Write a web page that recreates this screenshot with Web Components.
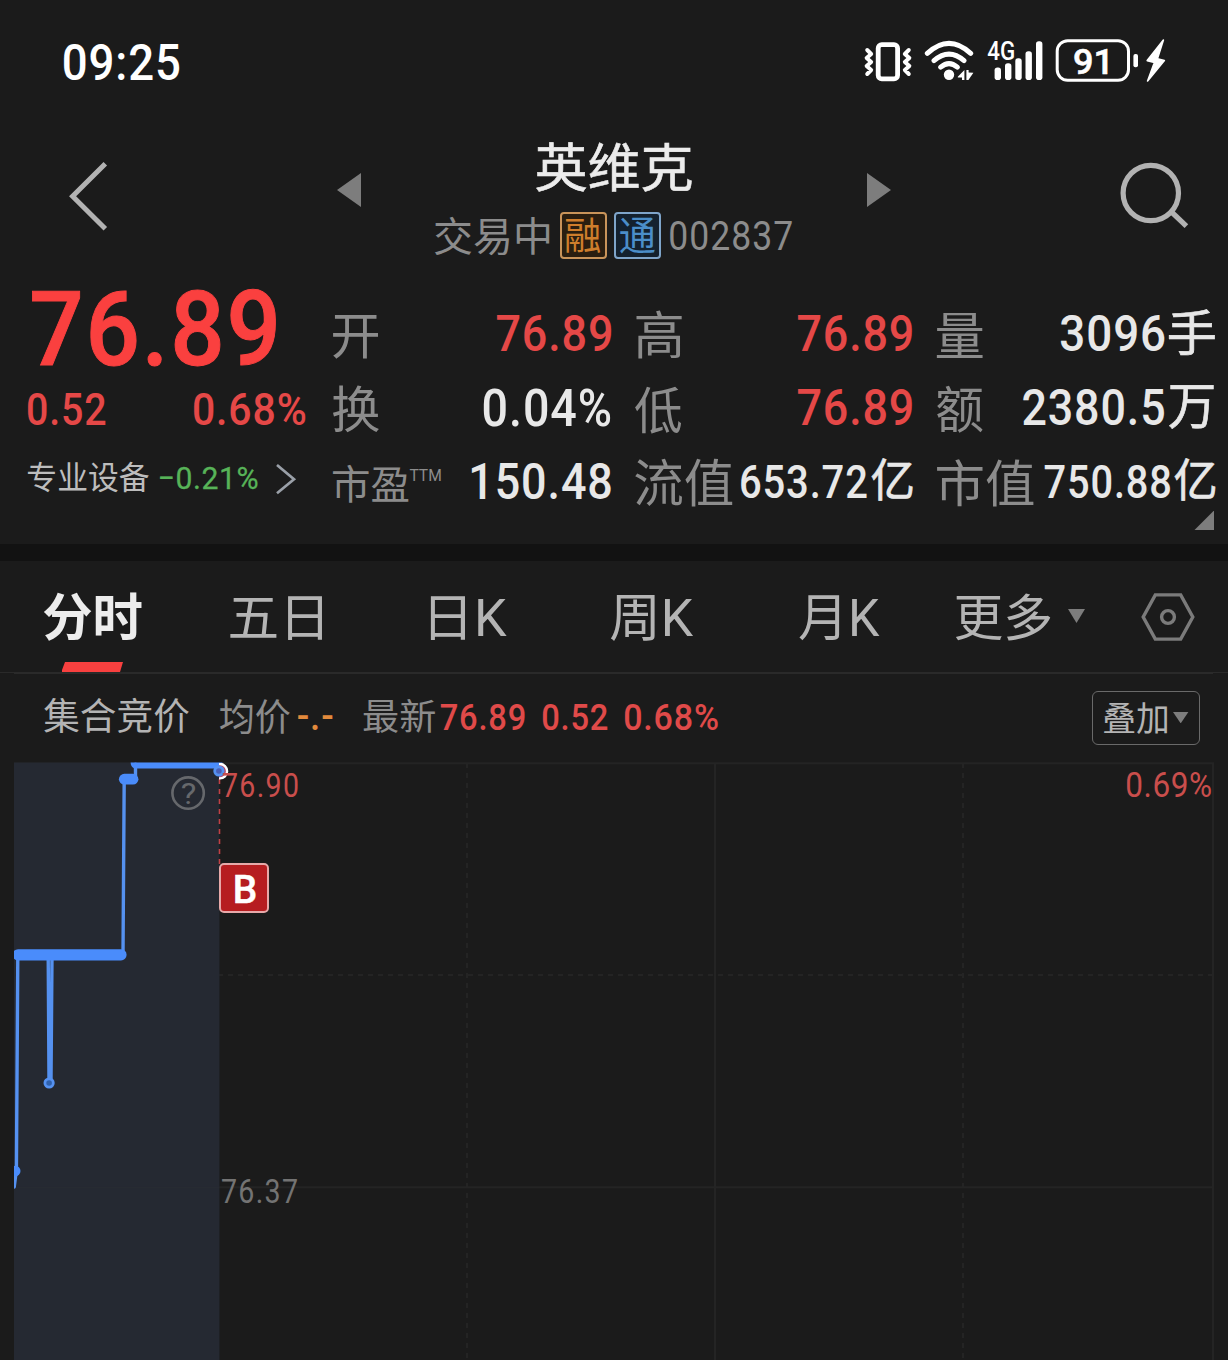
<!DOCTYPE html>
<html lang="zh-CN">
<head>
<meta charset="utf-8">
<title>英维克 002837</title>
<style>
html,body{margin:0;padding:0;background:#1b1b1b}
body{width:1228px;height:1360px;overflow:hidden;font-family:Roboto,"Noto Sans CJK SC",sans-serif;color:#e8e8e8}
</style>
</head>
<body>
<stock-page></stock-page>
<script>
// Base class: renders a template string into an open shadow root.
class Base extends HTMLElement {
  constructor(){ super(); this.attachShadow({mode:'open'}); }
  connectedCallback(){
    if(this.done) return; this.done = true;
    this.shadowRoot.innerHTML = '<style>:host{display:block}*{box-sizing:border-box}svg{display:block}' + (this.css||'') + '</style>' + this.html();
  }
  html(){ return '<slot></slot>'; }
}

// Text whose inked area fills exactly w x h pixels.
const pen = document.createElement('canvas').getContext('2d');
class FitText extends HTMLElement {
  constructor(){ super(); this.attachShadow({mode:'open'}); }
  connectedCallback(){
    const n = (k,d) => this.hasAttribute(k) ? parseFloat(this.getAttribute(k)) : d;
    const w=n('w',10), h=n('h',10), fs=n('fs',20), wt=n('wt',400), ls=n('ls',0), st=n('st',0);
    const fam = 'Roboto,"Noto Sans CJK SC",sans-serif';
    this.shadowRoot.innerHTML = `<style>
      :host{display:block;flex:none;width:${w}px;height:${h}px}
      span{display:block;width:max-content;white-space:nowrap;font:${wt} ${fs}px/.85 ${fam};letter-spacing:${ls}px;transform-origin:0 0;-webkit-text-stroke:${st}px currentColor}
      i{display:inline-block;width:0;height:0}
    </style><span><slot></slot><i></i></span>`;
    // Measured at ten times the size, so that rounding of the glyph bounds stays small.
    pen.font = `${wt} ${fs*10}px ${fam}`;
    pen.letterSpacing = ls*10+'px';
    const m = pen.measureText(this.textContent);
    const L=m.actualBoundingBoxLeft/10, R=m.actualBoundingBoxRight/10, A=m.actualBoundingBoxAscent/10, D=m.actualBoundingBoxDescent/10;
    // Antialiased edges spill over the outline, so the ink is inset slightly.
    const ix = .8 + st/2, iy = .2 + st/2;
    const sx = (w-2*ix)/(L+R), sy = (h-2*iy)/(A+D);
    const s = this.shadowRoot.querySelector('span'), probe = this.shadowRoot.querySelector('i');
    const base = probe.getBoundingClientRect().bottom - s.getBoundingClientRect().top;
    s.style.transform = `translate(${ix+L*sx}px,${iy-(base-A)*sy}px) scale(${sx},${sy})`;
  }
}
customElements.define('fit-text', FitText);

customElements.define('status-bar', class extends Base {
  css = `:host{height:120px}.row{display:flex;justify-content:space-between;align-items:flex-start;padding:0 60px 0 63px;color:#fff}
    .icons{display:flex;align-items:flex-start;padding-top:36px}.cell{display:grid}.cell>*{grid-area:1/1}`;
  html(){ return `<div class="row">
    <fit-text w="117" h="37.7" fs="52" wt="500" ls="1" style="margin-top:43.3px">09:25</fit-text>
    <div class="icons">
      <svg width="122" height="50" viewBox="862 36 122 50" fill="none" stroke="#fff" stroke-linecap="round" stroke-linejoin="round">
        <rect x="878.2" y="44.6" width="19.4" height="34.2" rx="3.6" stroke-width="4.8"/>
        <path d="M867.2 50l4 4-4.6 4 4.6 4-4.6 4 4.6 4-4 4M908.8 50l-4 4 4.6 4-4.6 4 4.6 4-4.6 4 4 4" stroke-width="3.9"/>
        <path d="M927.3 53.4Q949 33.4 970.7 53.4M934 60.6Q949 47.5 964 60.6M940.7 67.2Q949 60 957.3 67.2" stroke-width="5"/>
        <circle cx="949" cy="74.7" r="5.2" fill="#fff" stroke="none"/>
        <path d="M957.8 76.8L964.4 70V80H962V77.5H957.8ZM966.4 70H968.6V72.6L973.4 72.8L968.4 80H966.4Z" fill="#fff" stroke="none"/>
      </svg>
      <div class="cell">
        <svg width="70" height="50" viewBox="984 36 70 50" fill="#fff">
          <rect x="994.6" y="67.6" width="6.4" height="12.4" rx="2.8"/><rect x="1005" y="63.3" width="6.4" height="16.7" rx="2.8"/><rect x="1015.3" y="58.3" width="6.4" height="21.7" rx="2.8"/><rect x="1025.5" y="51.2" width="6.4" height="28.8" rx="2.8"/><rect x="1036" y="41.2" width="6.4" height="38.8" rx="2.8"/>
        </svg>
        <fit-text w="27.6" h="18.8" fs="25" wt="500" style="margin:5.7px 0 0 2.8px">4G</fit-text>
      </div>
      <div class="cell">
        <svg width="114" height="50" viewBox="1054 36 114 50">
          <rect x="1057.2" y="40.7" width="71.3" height="39.6" rx="10.5" fill="none" stroke="#fff" stroke-width="3"/>
          <rect x="1133.4" y="54" width="4.6" height="13.2" rx="2" fill="#fff"/>
          <path d="M1163.4 40L1147.2 60.6L1154.4 62.4L1147.6 81L1164.4 60.6L1157.4 58.8Z" fill="#fff" stroke="#fff" stroke-linejoin="round" stroke-width="1.6"/>
        </svg>
        <fit-text w="35.6" h="26.8" fs="36" wt="500" st=".6" style="margin:11.8px 0 0 19.2px">91</fit-text>
      </div>
    </div></div>`; }
});

customElements.define('stock-badge', class extends Base {
  css = `:host{display:grid;flex:none;width:47px;height:47px;border:2px solid var(--edge);border-radius:4px;background:var(--fill);color:var(--ink);place-items:center}`;
});

customElements.define('stock-header', class extends Base {
  css = `:host{height:150px}.bar{display:flex;align-items:flex-start}.mid{width:554px;margin-left:226px;display:flex;align-items:flex-start;justify-content:space-between}
    .title{display:flex;flex-direction:column;align-items:flex-start;width:360px}.sub{display:flex;align-items:flex-start;color:#8c8c8c;height:48px}`;
  html(){ return `<div class="bar">
    <svg width="44" height="76" viewBox="67 158 44 76" style="margin:38px 0 0 67px" fill="none" stroke="#b2b2b2" stroke-width="5"><path d="M105.3 163.8L72.6 196.3L105.3 228.8"/></svg>
    <div class="mid">
      <svg width="24" height="34" viewBox="0 0 24 34" style="margin-top:52.5px"><path d="M24 0V34L0 17Z" fill="#7d7d7d"/></svg>
      <div class="title">
        <fit-text w="158" h="50.4" fs="53" wt="400" st=".6" style="margin:21.5px 0 0 100.6px;color:#ececec">英维克</fit-text>
        <div class="sub" style="margin-top:19.9px">
          <fit-text w="116" h="38" fs="40" style="margin-top:5.5px">交易中</fit-text>
          <stock-badge style="margin-left:9.5px;--edge:#c9945a;--fill:#2a1e10;--ink:#cf7e2c"><fit-text w="36" h="36" fs="37">融</fit-text></stock-badge>
          <stock-badge style="margin-left:7px;--edge:#7fa5ca;--fill:#14212e;--ink:#4b8ec9"><fit-text w="37" h="36" fs="37">通</fit-text></stock-badge>
          <fit-text w="124" h="30.6" fs="41" wt="400" ls="1.2" style="margin:7.8px 0 0 8px">002837</fit-text>
        </div>
      </div>
      <svg width="24" height="34" viewBox="0 0 24 34" style="margin-top:52.5px"><path d="M0 0V34L24 17Z" fill="#7d7d7d"/></svg>
    </div>
    <svg width="74" height="74" viewBox="1118 160 74 74" style="margin:40px 0 0 227px" fill="none" stroke="#b2b2b2" stroke-width="5.2"><circle cx="1150.8" cy="193" r="27.7"/><path d="M1171 211.5L1186.4 226.2"/></svg>
  </div>`; }
});

customElements.define('quote-item', class extends Base {
  css = `:host{display:flex;justify-content:space-between;align-items:flex-start;min-width:0}::slotted([slot=label]){color:#8c8c8c}`;
  html(){ return `<slot name="label"></slot><slot></slot>`; }
});

customElements.define('quote-panel', class extends Base {
  css = `:host{height:274px;color:#e8e8e8}.all{display:flex;height:274px}.left{width:279px;margin-left:27px;display:flex;flex-direction:column}
   .row{display:flex;align-items:flex-start}.grid{display:grid;grid-template-columns:280px 279px 280.5px;column-gap:22.7px;grid-template-rows:74px 74px 56px;margin:38px 0 0 25.7px;height:204px}
   .red{color:#e54847}.corner{margin:-2.3px 2.2px 0 auto}.right{display:flex;flex-direction:column}`;
  html(){ return `<div class="all">
   <div class="left">
     <fit-text w="246.2" h="79.6" fs="108" wt="500" ls="2" st="1" style="margin:17.7px 0 0 4.3px;color:#fa403f">76.89</fit-text>
     <div class="row red" style="margin-top:25.4px;justify-content:space-between">
       <fit-text w="79" h="33.3" fs="45" wt="500" ls="1">0.52</fit-text>
       <fit-text w="113.2" h="33.3" fs="45" wt="500" ls="1">0.68%</fit-text>
     </div>
     <div class="row" style="margin-top:36px;color:#bdbdbd">
       <fit-text w="123" h="30.3" fs="31.5">专业设备</fit-text>
       <fit-text w="99.6" h="24.8" fs="33" ls=".6" st=".3" style="margin:3px 0 0 9.4px;color:#57b358">−0.21%</fit-text>
       <svg width="22" height="32" viewBox="0 0 22 32" style="margin:1px 0 0 16.4px" fill="none" stroke="#9aa0a8" stroke-width="2.7"><path d="M2 2L19 16.3L2 30.3"/></svg>
     </div>
   </div>
   <div class="right">
   <div class="grid">
     <quote-item><fit-text slot="label" w="47" h="44.4" fs="50" style="margin-top:7px">开</fit-text><fit-text class="red" w="116" h="38" fs="52" wt="500" ls="1" style="margin-top:6.3px">76.89</fit-text></quote-item>
     <quote-item><fit-text slot="label" w="47.4" h="47.9" fs="50" style="margin:3.3px 0 0 .3px">高</fit-text><fit-text class="red" w="115.8" h="38" fs="52" wt="500" ls="1" style="margin:6.3px .3px 0 0">76.89</fit-text></quote-item>
     <quote-item><fit-text slot="label" w="48" h="45.4" fs="50" style="margin-top:5.3px">量</fit-text><div class="row"><fit-text w="105.2" h="38" fs="52" wt="500" ls="1" style="margin-top:6.3px">3096</fit-text><fit-text w="47.7" h="46.6" fs="50" st=".7" style="margin:1px .8px 0 3.4px">手</fit-text></div></quote-item>
     <quote-item><fit-text slot="label" w="48.4" h="47.3" fs="50" style="margin-top:4px">换</fit-text><fit-text w="128.4" h="38.6" fs="52" wt="500" ls="1" style="margin-top:5.7px">0.04%</fit-text></quote-item>
     <quote-item><fit-text slot="label" w="48" h="47.6" fs="50" style="margin-top:3.7px">低</fit-text><fit-text class="red" w="115.8" h="38" fs="52" wt="500" ls="1" style="margin:6.3px .3px 0 0">76.89</fit-text></quote-item>
     <quote-item><fit-text slot="label" w="48" h="47.4" fs="50" style="margin-top:3.3px">额</fit-text><div class="row"><fit-text w="142.8" h="38" fs="52" wt="500" ls="1" style="margin-top:6.3px">2380.5</fit-text><fit-text w="47" h="44" fs="50" st=".7" style="margin:3px 1.3px 0 3.4px">万</fit-text></div></quote-item>
     <quote-item><div slot="label" class="row"><fit-text w="77.4" h="37.4" fs="40" style="margin:9.3px 0 0 0">市盈</fit-text><fit-text w="32.4" h="12.2" fs="17" wt="400" style="margin:13.3px 0 0 .4px">TTM</fit-text></div><fit-text w="141" h="38.3" fs="52" wt="500" ls="1" style="margin-top:5.7px">150.48</fit-text></quote-item>
     <quote-item><fit-text slot="label" w="99.6" h="48.3" fs="50" style="margin-top:3px">流值</fit-text><div class="row"><fit-text w="127.2" h="34.7" fs="47" wt="500" ls="1" style="margin-top:8px">653.72</fit-text><fit-text w="44" h="43" fs="46" st=".7" style="margin:2.3px -.4px 0 2.2px">亿</fit-text></div></quote-item>
     <quote-item><fit-text slot="label" w="98.6" h="48" fs="50" style="margin-top:3.3px">市值</fit-text><div class="row"><fit-text w="127.2" h="34.7" fs="47" wt="500" ls="1" style="margin-top:8px">750.88</fit-text><fit-text w="43.7" h="43" fs="46" st=".7" style="margin:2.3px -.4px 0 2.2px">亿</fit-text></div></quote-item>
   </div>
   <svg class="corner" width="20.5" height="20.5" viewBox="0 0 20 20"><path d="M20 0V20H0Z" fill="#7d7d7d"/></svg>
   </div>
  </div>`; }
});

customElements.define('period-tabs', class extends Base {
  css = `:host{height:113px}.row{display:flex;align-items:flex-start;height:111px;color:#b4b4b4}.active{display:flex;flex-direction:column;margin:31.5px 0 0 43px;color:#ececec}
   .line{height:1px;background:#2a2a2a}.line+.line{margin:0 15px 0 14px}`;
  html(){ return `<div class="row">
    <div class="active"><fit-text w="100" h="48.5" fs="50" wt="700">分时</fit-text><svg width="61" height="10" viewBox="0 0 61 10" style="margin:21px 0 0 19.2px"><path d="M3 0H61L58 10H0V8Z" fill="#f8403f"/></svg></div>
    <fit-text w="94.4" h="44.6" fs="50" style="margin:34.7px 0 0 86.3px">五日</fit-text>
    <fit-text w="78" h="44.3" fs="50" style="margin:34.7px 0 0 106.7px">日K</fit-text>
    <fit-text w="84.5" h="45.9" fs="50" style="margin:33.7px 0 0 101.2px">周K</fit-text>
    <fit-text w="83" h="45.9" fs="50" style="margin:33.7px 0 0 104px">月K</fit-text>
    <fit-text w="96.5" h="47.8" fs="50" style="margin:32.2px 0 0 74px">更多</fit-text>
    <svg width="17" height="14" viewBox="0 0 17 14" style="margin:47.5px 0 0 16px"><path d="M0 0H17L8.5 14Z" fill="#7d7d7d"/></svg>
    <svg width="54" height="48" viewBox="0 0 54 48" style="margin:32.3px 0 0 56.1px" fill="none" stroke="#7b7b7b"><path d="M14.3 1.9H39.7L51.8 24L39.7 46.1H14.3L2.2 24Z" stroke-width="3.4"/><circle cx="27" cy="24" r="6.4" stroke-width="3.4"/></svg>
  </div><div class="line"></div><div class="line"></div>`; }
});

customElements.define('chart-info', class extends Base {
  css = `:host{height:88px}.row{display:flex;align-items:flex-start;color:#8c8c8c}.r{color:#e04a49}
   .btn{display:flex;width:108px;height:54px;border:1px solid #6a6a6a;border-radius:6px;color:#b4b4b4;margin:17px 0 0 373px;padding:10.7px 0 0 10px;align-items:flex-start}`;
  html(){ return `<div class="row">
    <fit-text w="147" h="36" fs="37" style="margin:24px 0 0 42.5px;color:#b4b4b4">集合竞价</fit-text>
    <fit-text w="72.2" h="35.5" fs="37" style="margin:25px 0 0 29.3px">均价</fit-text>
    <fit-text w="36.6" h="15.8" fs="40" wt="500" ls="1" style="margin:40.7px 0 0 6.2px;color:#e28a3c">-.-</fit-text>
    <fit-text w="73" h="34.9" fs="37" style="margin:25.3px 0 0 29px">最新</fit-text>
    <fit-text class="r" w="85.3" h="28.2" fs="38" wt="500" ls=".9" style="margin:29.3px 0 0 4.4px">76.89</fit-text>
    <fit-text class="r" w="66" h="28.2" fs="38" wt="500" ls=".9" style="margin:29.3px 0 0 16.4px">0.52</fit-text>
    <fit-text class="r" w="94.6" h="28.2" fs="38" wt="500" ls=".9" style="margin:29.3px 0 0 16.3px">0.68%</fit-text>
    <div class="btn"><fit-text w="65" h="31.5" fs="33">叠加</fit-text><svg width="15.4" height="11.4" viewBox="0 0 15 11" preserveAspectRatio="none" style="margin:9.2px 0 0 5.6px"><path d="M0 0H15L7.5 11Z" fill="#7d7d7d"/></svg></div>
  </div>`; }
});

customElements.define('intraday-chart', class extends Base {
  // Labels and the trade marker float over the plot at their price position.
  css = `:host{position:relative;height:598px}.o{position:absolute}.b{display:flex;left:219.4px;top:101.3px;width:49.4px;height:49.4px;border:2px solid #e7a9a9;border-radius:5px;background:#b61d20;color:#fff;padding:9.5px 0 0 12.8px}`;
  html(){ return `<svg width="1228" height="598" viewBox="0 762 1228 598" fill="none">
    <g stroke="#242424" stroke-width="2">
      <path d="M14 763.3H1213V1360M715 763V1360M219 1187.3H1213"/>
      <path d="M467 763V1360M963 763V1360" stroke-dasharray="5 5"/>
      <path d="M218 975H1213" stroke-dasharray="5 5"/>
    </g>
    <rect x="14" y="762.6" width="205.4" height="598" fill="#252932"/>
    <path d="M14 1187.3H219" stroke="#282c33"/>
    <path d="M219.5 779V864" stroke="#c04044" stroke-width="1.6" stroke-dasharray="5 5"/>
    <clipPath id="c"><rect x="14" y="762.4" width="230" height="598"/></clipPath>
    <clipPath id="d"><rect x="219" y="762.4" width="20" height="30"/></clipPath>
    <g clip-path="url(#c)" stroke="#5591f0" stroke-linecap="round">
      <path d="M14.2 1187L16.4 1170L17.8 956" stroke-width="3.4"/>
      <path d="M48.2 956L49 1081M52 956L51 1081" stroke-width="3.4"/>
      <path d="M123 955L124.2 779M135.5 779V764" stroke-width="3.4"/>
      <path d="M18 954.8H121" stroke="#4a8cfb" stroke-width="11.2"/>
      <path d="M124.3 779.2H133" stroke="#4a8cfb" stroke-width="10.8"/>
      <path d="M136 763.1H217" stroke="#4a8cfb" stroke-width="10.8"/>
      <circle cx="219.9" cy="771.2" r="7.2" fill="#b44a6c" stroke="#fff" stroke-width="2.4" clip-path="url(#d)"/>
      <circle cx="49.1" cy="1083" r="4.2" fill="#3061ad" stroke-width="2.8"/>
      <circle cx="15.3" cy="1171" r="5.2" fill="#4a8cfb" stroke="none"/>
      <circle cx="218.9" cy="771" r="4.2" fill="#4a60b8" stroke-width="2.8"/>
    </g>
    <circle cx="188.1" cy="793.1" r="15.7" stroke="#66686c" stroke-width="2.6"/>
    </svg>
    <fit-text class="o" w="15" h="23" fs="30" style="left:180.6px;top:19.6px;color:#66686c">?</fit-text>
    <fit-text class="o" w="76.4" h="25.4" fs="34" ls="1.6" style="left:222px;top:9.7px;color:#c94e4c">76.90</fit-text>
    <fit-text class="o" w="86" h="26.5" fs="35" ls=".6" style="left:1126.2px;top:9px;color:#c94e4c">0.69%</fit-text>
    <fit-text class="o" w="77" h="25.4" fs="34" ls="1.6" style="left:220.6px;top:415.7px;color:#737373">76.37</fit-text>
    <div class="o b"><fit-text w="22.7" h="28.4" fs="39" wt="500" st=".5">B</fit-text></div>`; }
});

customElements.define('stock-page', class extends Base {
  css = `:host{width:1228px;height:1360px;overflow:hidden;background:#1b1b1b}.band{height:17px;background:#121212}`;
  html(){ return `<status-bar></status-bar><stock-header></stock-header><quote-panel></quote-panel><div class="band"></div><period-tabs></period-tabs><chart-info></chart-info><intraday-chart></intraday-chart>`; }
});
</script>
</body>
</html>
